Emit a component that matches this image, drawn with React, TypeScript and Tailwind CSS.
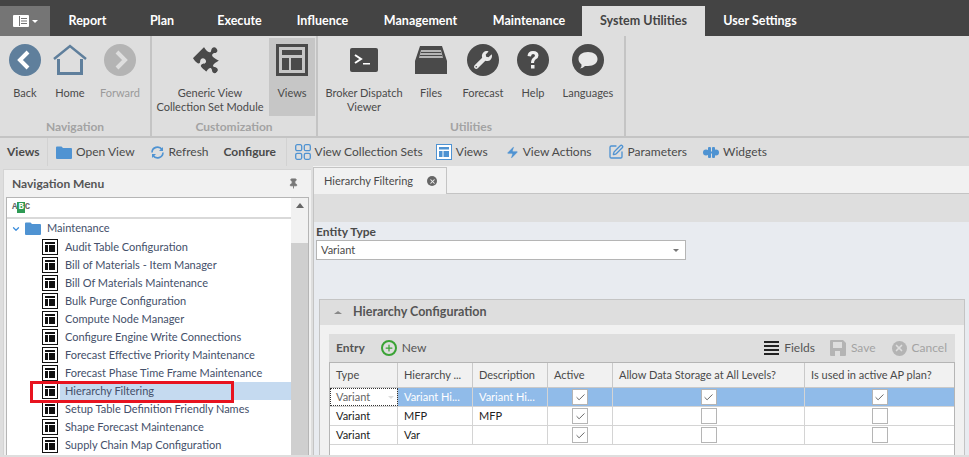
// Hierarchy Filtering screen with ribbon, navigation tree and entry grid
import React from "react";
import { ChevronDown, Pin, Check, Plus, X, Zap, SquarePen } from "lucide-react";
import { FaPuzzlePiece, FaWrench } from "react-icons/fa";

const SLATE = "#5f7f9c";
const DARK = "#4a4a4a";

const LayoutIcon: React.FC<{ size: number; line: number; color: string; fill?: string }> = ({ size, line, color, fill = "none" }) => (
    <svg width={size} height={size} viewBox="0 0 32 32" className="shrink-0">
        <rect x={line / 2} y={line / 2} width={32 - line} height={32 - line} fill={fill} stroke={color} strokeWidth={line} />
        <rect x="6" y="6" width="20" height="5" fill={color} />
        <rect x="6" y="14" width="7" height="12" fill={color} />
        <rect x="15" y="14" width="11" height="12" fill={color} />
    </svg>
);

const TreeIcon = () => (
    <svg width="16" height="16" viewBox="0 0 16 16" className="shrink-0">
        <rect x="0.5" y="0.5" width="15" height="15" fill="#fff" stroke="#111" />
        <rect x="3" y="3" width="10" height="2" fill="#111" />
        <rect x="3" y="6" width="3" height="7" fill="#111" />
        <rect x="7" y="6" width="6" height="7" fill="#111" />
    </svg>
);

const Folder: React.FC<{ w: number; h: number }> = ({ w, h }) => (
    <svg width={w} height={h} viewBox="0 0 16 13" className="shrink-0">
        <path d="M0 1.5 Q0 0.5 1 0.5 H5.5 L7 2 H15 Q16 2 16 3 V12 Q16 13 15 13 H1 Q0 13 0 12 Z" fill="#4f93d2" />
    </svg>
);

const RibbonButton: React.FC<{
    icon: React.ReactNode;
    label: React.ReactNode;
    className?: string;
    muted?: boolean;
}> = ({ icon, label, className = "", muted }) => (
    <div className={`flex flex-col items-center pt-[5px] h-[80px] ${className}`}>
        <div className="h-[33px] flex items-center justify-center">{icon}</div>
        <div className={`mt-[10px] text-center text-[11px] leading-[13.5px] whitespace-nowrap ${muted ? "text-[#9a9a9a]" : "text-[#4a4a4a]"}`}>
            {label}
        </div>
    </div>
);

const RibbonGroup: React.FC<{ title: string; className: string; children: React.ReactNode }> = ({ title, className, children }) => (
    <div className={`h-full flex flex-col border-r-2 border-[#c4c4c4] ${className}`}>
        <div className="flex h-[80px] pt-[2px]">{children}</div>
        <div className="text-center text-[12px] font-bold text-[#a3a3a3] leading-[16px] mt-[3px]">{title}</div>
    </div>
);

const ToolItem: React.FC<{ icon: React.ReactNode; label: string; className?: string }> = ({ icon, label, className = "" }) => (
    <div className={`flex items-center gap-[4px] text-[12px] text-[#4a4a4a] whitespace-nowrap ${className}`}>
        {icon}
        <span>{label}</span>
    </div>
);

const CheckCell: React.FC<{ checked?: boolean }> = ({ checked }) => (
    <div className="mx-auto w-[16px] h-[16px] bg-white border border-[#b5b5b5] flex items-center justify-center">
        {checked && <Check size={11} strokeWidth={1.75} color="#444" />}
    </div>
);

const tabs = ["Report", "Plan", "Execute", "Influence", "Management", "Maintenance"];
const tabWidths = ["w-[75px]", "w-[74px]", "w-[81px]", "w-[85px]", "w-[111px]", "w-[106px]"];

const treeItems = [
    "Audit Table Configuration",
    "Bill of Materials - Item Manager",
    "Bill Of Materials Maintenance",
    "Bulk Purge Configuration",
    "Compute Node Manager",
    "Configure Engine Write Connections",
    "Forecast Effective Priority Maintenance",
    "Forecast Phase Time Frame Maintenance",
    "Hierarchy Filtering",
    "Setup Table Definition Friendly Names",
    "Shape Forecast Maintenance",
    "Supply Chain Map Configuration",
];

const rows = [
    { type: "Variant", name: "Variant Hi...", desc: "Variant Hi...", active: true, allow: true, used: true, selected: true },
    { type: "Variant", name: "MFP", desc: "MFP", active: true, allow: false, used: false, selected: false },
    { type: "Variant", name: "Var", desc: "", active: true, allow: false, used: false, selected: false },
];

export default function App() {
    return (
        <div className="w-[969px] h-[457px] overflow-hidden bg-[#dedede] font-['Lato',sans-serif]">
            {/* Top tabs */}
            <div className="h-[36px] bg-[#444444] flex items-end">
                <div className="w-[50px] h-[30px] bg-[#757575] flex items-center justify-center gap-[3px]">
                    <svg width="16" height="12" viewBox="0 0 16 12">
                        <rect width="16" height="12" rx="1" fill="#fff" />
                        <rect x="6" y="1" width="1" height="10" fill="#757575" />
                        <rect x="8" y="3" width="6" height="1" fill="#757575" />
                        <rect x="8" y="5.5" width="6" height="1" fill="#757575" />
                        <rect x="8" y="8" width="6" height="1" fill="#757575" />
                    </svg>
                    <div className="w-0 h-0 border-x-[3px] border-x-transparent border-t-[3px] border-t-white" />
                </div>
                {tabs.map((t, i) => (
                    <div key={t} className={`${tabWidths[i]} h-[30px] flex items-center justify-center text-[12.5px] font-bold text-white`}>
                        {t}
                    </div>
                ))}
                <div className="w-[123px] h-[30px] bg-[#dedede] flex items-center justify-center text-[12.5px] font-bold text-[#444]">
                    System Utilities
                </div>
                <div className="w-[110px] h-[30px] flex items-center justify-center text-[12.5px] font-bold text-white">User Settings</div>
            </div>

            {/* Ribbon */}
            <div className="h-[102px] flex border-b-2 border-[#c4c4c4]">
                <RibbonGroup title="Navigation" className="w-[152px]">
                    <RibbonButton
                        className="w-[50px]"
                        label="Back"
                        icon={
                            <svg width="32" height="32" viewBox="0 0 32 32">
                                <circle cx="16" cy="16" r="16" fill={SLATE} />
                                <path d="M19 8 L11 16 L19 24" fill="none" stroke="#fff" strokeWidth="4" />
                            </svg>
                        }
                    />
                    <RibbonButton
                        className="w-[40px]"
                        label="Home"
                        icon={
                            <svg width="34" height="32" viewBox="0 0 34 32">
                                <path d="M1 15 L17 2 L33 15" fill="none" stroke={SLATE} strokeWidth="2.5" />
                                <path d="M5.5 15 V29.5 H28.5 V15" fill="none" stroke={SLATE} strokeWidth="3" />
                            </svg>
                        }
                    />
                    <RibbonButton
                        className="w-[60px]"
                        label="Forward"
                        muted
                        icon={
                            <svg width="32" height="32" viewBox="0 0 32 32">
                                <circle cx="16" cy="16" r="16" fill="#b4b4b4" />
                                <path d="M13 8 L21 16 L13 24" fill="none" stroke="#dedede" strokeWidth="4" />
                            </svg>
                        }
                    />
                </RibbonGroup>
                <RibbonGroup title="Customization" className="w-[166px]">
                    <RibbonButton
                        className="w-[116px]"
                        label={<>Generic View<br />Collection Set Module</>}
                        icon={<FaPuzzlePiece size={27} color={DARK} className="rotate-45" />}
                    />
                    <div className="ml-[1px] w-[46px] h-[78px] bg-[#c6c6c6]">
                        <RibbonButton
                            className="!pt-[5px]"
                            label="Views"
                            icon={<LayoutIcon size={32} line={3} color={DARK} />}
                        />
                    </div>
                </RibbonGroup>
                <RibbonGroup title="Utilities" className="w-[308px]">
                    <RibbonButton
                        className="w-[92px]"
                        label={<>Broker Dispatch<br />Viewer</>}
                        icon={
                            <svg width="28" height="24" viewBox="0 0 28 24">
                                <rect width="28" height="24" rx="2" fill={DARK} />
                                <path d="M5 7 L11 11 L5 15" fill="none" stroke="#fff" strokeWidth="2" />
                                <rect x="13" y="15" width="7" height="1.5" fill="#fff" />
                            </svg>
                        }
                    />
                    <RibbonButton
                        className="w-[42px]"
                        label="Files"
                        icon={
                            <svg width="32" height="28" viewBox="0 0 32 28">
                                <path d="M5 0 H27 L32 15 V28 H0 V15 Z" fill={DARK} />
                                <path d="M6 4 H26 L28 12 H4 Z" fill="#b5b5b5" />
                                <rect x="6" y="6" width="20" height="1" fill={DARK} />
                                <rect x="5" y="9" width="22" height="1" fill={DARK} />
                            </svg>
                        }
                    />
                    <RibbonButton
                        className="w-[62px]"
                        label="Forecast"
                        icon={
                            <span className="w-[32px] h-[32px] rounded-full bg-[#4a4a4a] flex items-center justify-center">
                                <FaWrench size={18} color="#e8e8e8" />
                            </span>
                        }
                    />
                    <RibbonButton
                        className="w-[38px]"
                        label="Help"
                        icon={
                            <svg width="32" height="32" viewBox="0 0 32 32">
                                <circle cx="16" cy="16" r="16" fill={DARK} />
                                <path d="M10.5 12 Q11 7 16 7 Q21.5 7 21.5 11.5 Q21.5 14 18.5 15.5 Q17 16.5 17 19 H14 Q14 15 16.5 13.5 Q18 12.5 18 11.5 Q18 10 16 10 Q14 10 14 12.5 Z" fill="#f0f0f0" />
                                <rect x="14" y="21" width="3.5" height="3.5" fill="#f0f0f0" />
                            </svg>
                        }
                    />
                    <RibbonButton
                        className="w-[72px]"
                        label="Languages"
                        icon={
                            <svg width="32" height="32" viewBox="0 0 32 32">
                                <circle cx="16" cy="16" r="16" fill={DARK} />
                                <path d="M16 8 C22 8 25.5 11 25.5 15 C25.5 19 22 22 16 22 L13 22 Q11 24 8 24.5 Q10 22.5 9.5 20.5 C7.5 19 6.5 17 6.5 15 C6.5 11 10 8 16 8 Z" fill="#e8e8e8" />
                            </svg>
                        }
                    />
                </RibbonGroup>
            </div>

            {/* Toolbar */}
            <div className="h-[28px] flex items-center">
                <div className="w-[48px] pl-[7px] text-[12px] font-bold text-[#4a4a4a] border-r border-[#d2d2d2] h-full flex items-center">Views</div>
                <ToolItem className="ml-[8px]" label="Open View" icon={<Folder w={16} h={13} />} />
                <ToolItem
                    className="ml-[15px]"
                    label="Refresh"
                    icon={
                        <svg width="15" height="15" viewBox="0 0 15 15">
                            <path d="M2 7.5 A5.5 5.5 0 0 1 12 4.5 M13 7.5 A5.5 5.5 0 0 1 3 10.5" fill="none" stroke="#4f93d2" strokeWidth="1.6" />
                            <path d="M13 2 V6 H9 Z M2 13 V9 H6 Z" fill="#4f93d2" />
                        </svg>
                    }
                />
                <div className="ml-[15px] w-[62px] text-[12px] font-bold text-[#4a4a4a]">Configure</div>
                <div className="w-px h-full bg-[#d2d2d2]" />
                <ToolItem
                    className="ml-[8px]"
                    label="View Collection Sets"
                    icon={
                        <svg width="16" height="16" viewBox="0 0 16 16" fill="none" stroke="#4f93d2" strokeWidth="1.3">
                            <rect x="0.7" y="0.7" width="6" height="6" rx="1.5" />
                            <rect x="9.3" y="0.7" width="6" height="6" rx="1.5" />
                            <rect x="0.7" y="9.3" width="6" height="6" rx="1.5" />
                            <rect x="9.3" y="9.3" width="6" height="6" rx="1.5" />
                        </svg>
                    }
                />
                <ToolItem className="ml-[13px]" label="Views" icon={<LayoutIcon size={16} line={2} color="#4f93d2" fill="#fff" />} />
                <ToolItem className="ml-[18px]" label="View Actions" icon={<Zap size={13} color="#4f93d2" fill="#4f93d2" strokeWidth={0.5} />} />
                <ToolItem className="ml-[16px]" label="Parameters" icon={<SquarePen size={16} color="#4f93d2" strokeWidth={2} />} />
                <ToolItem
                    className="ml-[16px]"
                    label="Widgets"
                    icon={
                        <svg width="16" height="11" viewBox="0 0 16 11" fill="#4f93d2">
                            <circle cx="3" cy="5.5" r="3" />
                            <rect x="5" y="0" width="3" height="11" rx="1" />
                            <rect x="9" y="0" width="3" height="11" rx="1" />
                            <circle cx="13" cy="5.5" r="3" />
                            <rect x="2" y="4.5" width="12" height="2" />
                        </svg>
                    }
                />
            </div>

            {/* Body */}
            <div className="h-[289px] flex">
                {/* Navigation menu */}
                <div className="relative ml-[3px] mt-[3px] w-[308px] bg-[#f1f1f1] border-l border-t border-[#d4d4d4] flex flex-col px-[2px]">
                    <div className="h-[27px] flex items-center justify-between pl-[6px] pr-[10px] text-[12px] font-bold text-[#555]">
                        <span>Navigation Menu</span>
                        <Pin size={11} color="#777" fill="#777" />
                    </div>
                    <div className="flex-1 border border-[#b5b5b5] border-b-0 bg-white flex overflow-hidden">
                        <div className="flex-1">
                            <div className="h-[21px] border-b-2 border-[#d9d9d9] flex items-center pl-[5px]">
                                <span className="font-['Liberation_Mono',monospace] text-[9px] font-bold text-[#666] leading-[11px]">A</span>
                                <span className="bg-[#2e9a55] text-white font-['Liberation_Mono',monospace] text-[9px] font-bold px-[1px] leading-[11px]">B</span>
                                <span className="font-['Liberation_Mono',monospace] text-[9px] font-bold text-[#666] leading-[11px]">C</span>
                            </div>
                            <div className="h-[19px] flex items-center pl-[4px] text-[11px] text-[#44506a]">
                                <ChevronDown size={10} color="#3f8fdc" strokeWidth={3} />
                                <span className="ml-[4px]"><Folder w={16} h={13} /></span>
                                <span className="ml-[6px]">Maintenance</span>
                            </div>
                            {treeItems.map((item) => (
                                <div key={item} className="h-[18px] flex items-center pl-[35px] text-[11px] text-[#44506a] whitespace-nowrap">
                                    <TreeIcon />
                                    <span className={`ml-[2px] h-full flex-1 flex items-center pl-[5px] ${item === "Hierarchy Filtering" ? "bg-[#c5daf0]" : ""}`}>
                                        {item}
                                    </span>
                                </div>
                            ))}
                        </div>
                        <div className="w-[17px] flex flex-col bg-[#cfcfcf]">
                            <div className="h-[45px] bg-[#f1f1f1] flex justify-center pt-[5px]">
                                <div className="w-0 h-0 border-x-[4px] border-x-transparent border-b-[5px] border-b-[#666]" />
                            </div>
                        </div>
                    </div>
                    {/* Red callout round the selected entry */}
                    <div className="absolute left-[26px] top-[211px] w-[204px] h-[22px] border-[3px] border-[#e8131f]" />
                </div>

                {/* Main area */}
                <div className="ml-[2px] flex-1 flex flex-col min-w-0">
                    <div className="h-[28px] bg-[#f1f1f1] flex items-end border-b border-[#c4c4c4] shrink-0">
                        <div className="w-[134px] h-[27px] -mb-px bg-[#f1f1f1] border border-b-0 border-[#c4c4c4] flex items-center pl-[10px] text-[11px] text-[#4a4a4a] whitespace-nowrap">
                            <span>Hierarchy Filtering</span>
                            <span className="ml-[14px] w-[10px] h-[10px] rounded-full bg-[#666] flex items-center justify-center">
                                <X size={7} color="#f1f1f1" strokeWidth={3.5} />
                            </span>
                        </div>
                    </div>
                    <div className="h-[28px] bg-[#dedede] border-l border-[#c4c4c4] shrink-0" />
                    <div className="flex-1 bg-[#e8ebf0] border-l border-[#c4c4c4] min-h-0 flex flex-col">
                        <div className="pl-[2px] pt-[2px]">
                            <div className="text-[12px] font-bold text-[#4a4a4a] leading-[15px]">Entity Type</div>
                            <div className="mt-[1px] w-[370px] h-[20px] bg-white border border-[#b5b5b5] flex items-center justify-between pl-[4px] pr-[6px] text-[11px] text-[#4a4a4a]">
                                <span>Variant</span>
                                <div className="w-0 h-0 border-x-[3px] border-x-transparent border-t-[3px] border-t-[#777]" />
                            </div>
                        </div>
                        {/* Hierarchy configuration panel */}
                        <div className="ml-[5px] mr-[4px] mt-[39px] flex-1 border border-b-0 border-[#c4c4c4] bg-[#f1f1f1] flex flex-col min-h-0">
                            <div className="h-[25px] bg-[#dedede] flex items-center pl-[14px] text-[12.5px] font-bold text-[#555] shrink-0">
                                <div className="w-0 h-0 border-x-[4px] border-x-transparent border-b-[3px] border-b-[#888]" />
                                <span className="ml-[11px]">Hierarchy Configuration</span>
                            </div>
                            <div className="mx-[9px] mt-[9px] flex-1 flex flex-col min-h-0">
                                <div className="h-[28px] bg-[#dedede] flex items-center px-[7px] text-[12px] text-[#555] shrink-0">
                                    <span className="font-bold">Entry</span>
                                    <span className="ml-[16px] w-[16px] h-[16px] rounded-full border-2 border-[#3aa335] flex items-center justify-center">
                                        <Plus size={10} color="#3aa335" strokeWidth={3} />
                                    </span>
                                    <span className="ml-[5px]">New</span>
                                    <div className="flex-1" />
                                    <div className="flex flex-col gap-[2px] w-[15px]">
                                        <div className="h-[2px] bg-[#222]" />
                                        <div className="h-[2px] bg-[#222]" />
                                        <div className="h-[2px] bg-[#222]" />
                                        <div className="h-[2px] bg-[#222]" />
                                    </div>
                                    <span className="ml-[5px]">Fields</span>
                                    <svg width="16" height="16" viewBox="0 0 16 16" className="ml-[15px]">
                                        <path d="M0 1 Q0 0 1 0 H13 L16 3 V15 Q16 16 15 16 H1 Q0 16 0 15 Z" fill="#b4b4b4" />
                                        <rect x="3" y="2" width="9" height="6" fill="#dedede" />
                                        <rect x="5" y="11" width="5" height="5" fill="#dedede" />
                                    </svg>
                                    <span className="ml-[5px] text-[#a3a3a3]">Save</span>
                                    <span className="ml-[16px] w-[15px] h-[15px] rounded-full bg-[#b4b4b4] flex items-center justify-center">
                                        <X size={10} color="#dedede" strokeWidth={4} />
                                    </span>
                                    <span className="ml-[5px] mr-[1px] text-[#a3a3a3]">Cancel</span>
                                </div>
                                <div className="flex-1 bg-white border border-b-0 border-[#b5b5b5] min-h-0 overflow-hidden">
                                    <div className="grid grid-cols-[68px_75px_75px_65px_192px_1fr] h-[25px] bg-[#f1f1f1] border-b border-[#c9c9c9] text-[11px] text-[#4a4a4a]">
                                        <div className="border-r border-[#c9c9c9] pl-[6px] flex items-center">Type</div>
                                        <div className="border-r border-[#c9c9c9] pl-[6px] flex items-center">Hierarchy ...</div>
                                        <div className="border-r border-[#c9c9c9] pl-[6px] flex items-center">Description</div>
                                        <div className="border-r border-[#c9c9c9] pl-[6px] flex items-center">Active</div>
                                        <div className="border-r border-[#c9c9c9] pl-[6px] flex items-center">Allow Data Storage at All Levels?</div>
                                        <div className="pl-[6px] flex items-center">Is used in active AP plan?</div>
                                    </div>
                                    {rows.map((r) => {
                                        const sel = r.selected;
                                        const cell = `border-r border-[#d4d4d4] pl-[6px] flex items-center ${sel ? "bg-[#90bbe9] text-white" : "text-[#222]"}`;
                                        return (
                                            <div key={r.name} className="grid grid-cols-[68px_75px_75px_65px_192px_1fr] h-[19px] border-b border-[#d4d4d4] text-[11px]">
                                                <div className={`border-r border-[#d4d4d4] pl-[6px] flex items-center justify-between ${sel ? "outline-1 -outline-offset-1 outline-dotted outline-[#333] text-[#666] pr-[3px]" : "text-[#222]"}`}>
                                                    <span>{r.type}</span>
                                                    {sel && <div className="w-0 h-0 border-x-[3px] border-x-transparent border-t-[3px] border-t-[#ddd]" />}
                                                </div>
                                                <div className={cell}>{r.name}</div>
                                                <div className={cell}>{r.desc}</div>
                                                <div className={`${cell} !pl-0`}><CheckCell checked={r.active} /></div>
                                                <div className={`${cell} !pl-0`}><CheckCell checked={r.allow} /></div>
                                                <div className={`${sel ? "bg-[#90bbe9]" : ""} flex items-center`}><CheckCell checked={r.used} /></div>
                                            </div>
                                        );
                                    })}
                                </div>
                            </div>
                        </div>
                    </div>
                </div>
            </div>
        </div>
    );
}
